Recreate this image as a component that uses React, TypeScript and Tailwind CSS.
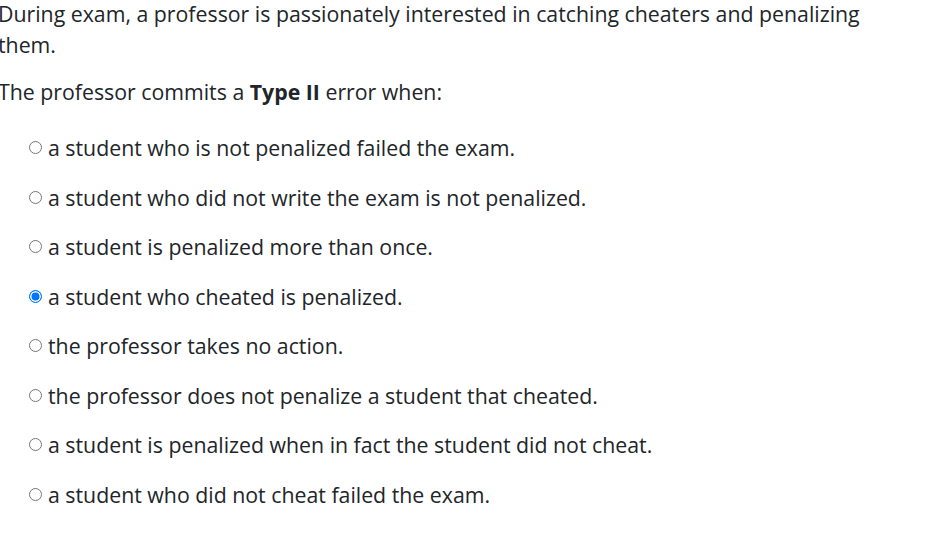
const options = [
  'a student who is not penalized failed the exam.',
  'a student who did not write the exam is not penalized.',
  'a student is penalized more than once.',
  'a student who cheated is penalized.',
  'the professor takes no action.',
  'the professor does not penalize a student that cheated.',
  'a student is penalized when in fact the student did not cheat.',
  'a student who did not cheat failed the exam.',
];

export default function App() {
  return (
    <div className="min-h-screen overflow-hidden bg-white text-[#212529] text-[21.3px] leading-[31px] font-['Open_Sans','Liberation_Sans',sans-serif]">
      <div className="-mt-[2px] ml-[-2px] w-[870px]">
        <p className="mb-[16px]">
          During exam, a professor is passionately interested in catching cheaters and penalizing them.
        </p>
        <p>
          The professor commits a <b className="font-bold">Type II</b> error when:
        </p>
        <div className="mt-[16px] pl-[31px]">
          {options.map((text, i) => (
            <label key={i} className="flex h-[49.5px] items-center">
              <input
                type="radio"
                name="answer"
                readOnly
                checked={i === 3}
                className="m-0 mr-[6px] h-[13px] w-[13px] shrink-0 appearance-none rounded-full border border-[#767676] bg-white checked:border-[1.5px] checked:border-[#0075ff] checked:bg-[#0075ff] checked:shadow-[inset_0_0_0_1.5px_#ffffff]"
              />
              <span>{text}</span>
            </label>
          ))}
        </div>
      </div>
    </div>
  );
}
